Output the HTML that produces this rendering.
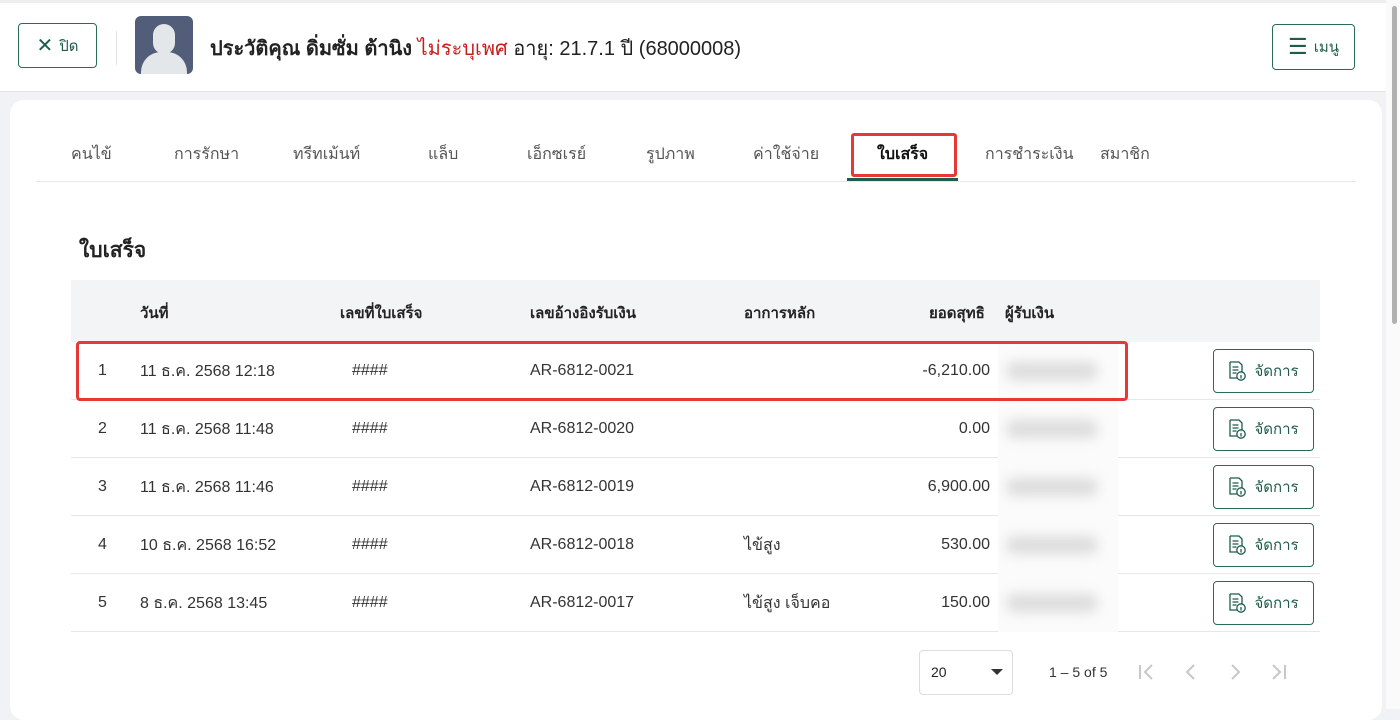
<!DOCTYPE html>
<html><head><meta charset="utf-8"><style>
*{box-sizing:border-box;margin:0;padding:0}
body{width:1400px;height:709px;overflow:hidden;background:#f0f2f5;font-family:"Liberation Sans","Noto Sans CJK SC",sans-serif;color:#222;position:relative}
.hdr{position:absolute;left:0;top:0;width:1386px;height:92px;background:#fff;border-top:3px solid #eee;border-bottom:1px solid #e3e3e3}
.btn{position:absolute;border:1px solid #2a6b58;border-radius:4px;background:#fff;color:#1f5c4a;font-size:15px;display:flex;align-items:center;justify-content:center;gap:6px}
.card{position:absolute;left:10px;top:100px;width:1372px;height:620px;background:#fff;border-radius:14px}
.tab{position:absolute;top:142px;font-size:16px;color:#555}
.t{position:absolute;font-size:16px;color:#333}
.th{position:absolute;top:301px;font-size:15px;font-weight:bold;color:#222}
.row{position:absolute;left:71px;width:1249px;height:58px;border-bottom:1px solid #e5e7eb}
.blur{position:absolute;left:998px;width:120px;height:58px;background:#fbfbfb}
.blur i{position:absolute;left:8px;top:20px;width:92px;height:18px;border-radius:9px;background:#dcdcdc;filter:blur(6px)}
</style></head><body>
<div class="hdr">
 <div class="btn" style="left:18px;top:20px;width:79px;height:45px"><span style="font-size:20px">✕</span>ปิด</div>
 <div style="position:absolute;left:116px;top:28px;width:1px;height:34px;background:#e2e2e2"></div>
 <div style="position:absolute;left:135px;top:13px;width:58px;height:58px;background:#525d7a;border-radius:6px;overflow:hidden">
  <div style="position:absolute;left:18px;top:8px;width:22px;height:30px;border-radius:11px;background:#e3e7ea"></div>
  <div style="position:absolute;left:6px;top:36px;width:46px;height:36px;border-radius:20px 20px 0 0;background:#e3e7ea"></div>
 </div>
 <div style="position:absolute;left:210px;top:29px;font-size:20px;white-space:nowrap"><b>ประวัติคุณ ดิ่มซั่ม ต้านิง</b> <span style="color:#c61d1d">ไม่ระบุเพศ</span> อายุ: 21.7.1 ปี (68000008)</div>
 <div class="btn" style="left:1272px;top:21px;width:83px;height:46px"><span style="font-size:22px">☰</span>เมนู</div>
</div>
<div style="position:absolute;left:1386px;top:0;width:14px;height:709px;background:#fafafa"></div>
<div style="position:absolute;left:1392px;top:6px;width:5px;height:318px;background:#b0b0b0;border-radius:3px"></div>
<div class="card"></div>
<div class="tab" style="left:71px">คนไข้</div>
<div class="tab" style="left:174px">การรักษา</div>
<div class="tab" style="left:293px">ทรีทเม้นท์</div>
<div class="tab" style="left:428px">แล็บ</div>
<div class="tab" style="left:527px">เอ็กซเรย์</div>
<div class="tab" style="left:646px">รูปภาพ</div>
<div class="tab" style="left:753px">ค่าใช้จ่าย</div>
<div class="tab" style="left:877px;color:#111;font-weight:bold">ใบเสร็จ</div>
<div class="tab" style="left:985px">การชำระเงิน</div>
<div class="tab" style="left:1100px">สมาชิก</div>
<div style="position:absolute;left:36px;top:181px;width:1320px;height:1px;background:#e5e7eb"></div>
<div style="position:absolute;left:847px;top:178px;width:111px;height:3px;background:#1f5c4a"></div>
<div style="position:absolute;left:851px;top:133px;width:106px;height:44px;border:3px solid #e53935;border-radius:3px"></div>
<div style="position:absolute;left:79px;top:234px;font-size:21px;font-weight:bold">ใบเสร็จ</div>
<div style="position:absolute;left:71px;top:280px;width:1249px;height:62px;background:#f3f4f6"></div>
<div class="th" style="left:140px">วันที่</div>
<div class="th" style="left:340px">เลขที่ใบเสร็จ</div>
<div class="th" style="left:530px">เลขอ้างอิงรับเงิน</div>
<div class="th" style="left:744px">อาการหลัก</div>
<div class="th" style="left:929px">ยอดสุทธิ</div>
<div class="th" style="left:1005px">ผู้รับเงิน</div>

<div class="row" style="top:342px"></div><div class="row" style="top:400px"></div><div class="row" style="top:458px"></div><div class="row" style="top:516px"></div><div class="row" style="top:574px"></div>
<div class="blur" style="top:342px"><i></i></div><div class="blur" style="top:400px"><i></i></div><div class="blur" style="top:458px"><i></i></div><div class="blur" style="top:516px"><i></i></div><div class="blur" style="top:574px"><i></i></div>

<div class="t" style="left:98px;top:362px">1</div><div class="t" style="left:140px;top:359px">11 ธ.ค. 2568 12:18</div><div class="t" style="left:352px;top:362px">####</div><div class="t" style="left:530px;top:362px">AR-6812-0021</div><div class="t" style="right:410px;top:362px">-6,210.00</div>
<div class="t" style="left:98px;top:420px">2</div><div class="t" style="left:140px;top:417px">11 ธ.ค. 2568 11:48</div><div class="t" style="left:352px;top:420px">####</div><div class="t" style="left:530px;top:420px">AR-6812-0020</div><div class="t" style="right:410px;top:420px">0.00</div>
<div class="t" style="left:98px;top:478px">3</div><div class="t" style="left:140px;top:475px">11 ธ.ค. 2568 11:46</div><div class="t" style="left:352px;top:478px">####</div><div class="t" style="left:530px;top:478px">AR-6812-0019</div><div class="t" style="right:410px;top:478px">6,900.00</div>
<div class="t" style="left:98px;top:536px">4</div><div class="t" style="left:140px;top:533px">10 ธ.ค. 2568 16:52</div><div class="t" style="left:352px;top:536px">####</div><div class="t" style="left:530px;top:536px">AR-6812-0018</div><div class="t" style="left:744px;top:533px">ไข้สูง</div><div class="t" style="right:410px;top:536px">530.00</div>
<div class="t" style="left:98px;top:594px">5</div><div class="t" style="left:140px;top:591px">8 ธ.ค. 2568 13:45</div><div class="t" style="left:352px;top:594px">####</div><div class="t" style="left:530px;top:594px">AR-6812-0017</div><div class="t" style="left:744px;top:591px">ไข้สูง เจ็บคอ</div><div class="t" style="right:410px;top:594px">150.00</div>

<div style="position:absolute;left:76px;top:341px;width:1052px;height:60px;border:3px solid #e53935;border-radius:4px"></div>

<svg width="0" height="0" style="position:absolute"><defs><g id="ic" fill="none" stroke="#1f5c4a" stroke-width="1.3"><path d="M2 1h9l3 3v7M2 1v16h7"/><path d="M4.5 6h6M4.5 9h6M4.5 12h4"/><circle cx="13" cy="15" r="4.2"/><path d="M13 14v3.5M13 12.5v.3"/></g></defs></svg>
<div class="btn" style="left:1213px;top:349px;width:101px;height:44px"><svg width="20" height="20"><use href="#ic"/></svg>จัดการ</div>
<div class="btn" style="left:1213px;top:407px;width:101px;height:44px"><svg width="20" height="20"><use href="#ic"/></svg>จัดการ</div>
<div class="btn" style="left:1213px;top:465px;width:101px;height:44px"><svg width="20" height="20"><use href="#ic"/></svg>จัดการ</div>
<div class="btn" style="left:1213px;top:523px;width:101px;height:44px"><svg width="20" height="20"><use href="#ic"/></svg>จัดการ</div>
<div class="btn" style="left:1213px;top:581px;width:101px;height:44px"><svg width="20" height="20"><use href="#ic"/></svg>จัดการ</div>

<div style="position:absolute;left:919px;top:650px;width:94px;height:45px;border:1px solid #ddd;border-radius:4px"></div>
<div style="position:absolute;left:931px;top:664px;font-size:14px">20</div>
<div style="position:absolute;left:991px;top:669px;width:0;height:0;border-left:6px solid transparent;border-right:6px solid transparent;border-top:6px solid #333"></div>
<div style="position:absolute;left:1049px;top:664px;font-size:14px;color:#333">1 – 5 of 5</div>
<svg style="position:absolute;left:1135px;top:660px" width="160" height="24" fill="none" stroke="#c8c8c8" stroke-width="2"><path d="M5 5v14M17 5l-7 7 7 7"/><path d="M59 5l-7 7 7 7"/><path d="M97 5l7 7-7 7"/><path d="M138 5l7 7-7 7M150 5v14"/></svg>
</body></html>
